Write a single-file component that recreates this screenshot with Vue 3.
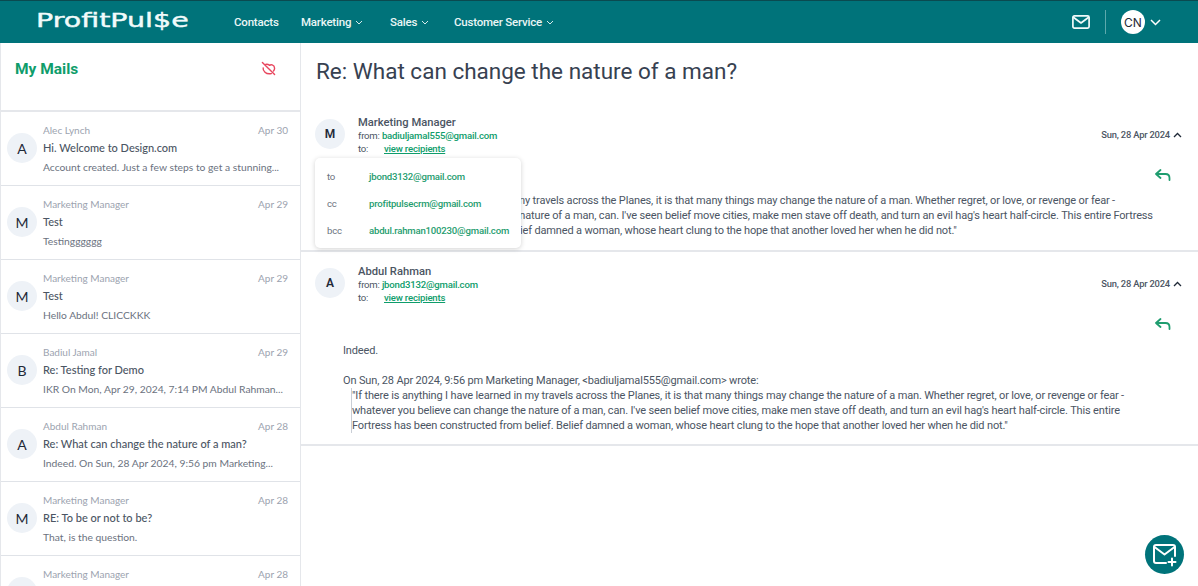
<script setup>
const mails = [
  { n: 'Alec Lynch', d: 'Apr 30', s: 'Hi. Welcome to Design.com', p: 'Account created. Just a few steps to get a stunning...', a: 'A' },
  { n: 'Marketing Manager', d: 'Apr 29', s: 'Test', p: 'Testingggggg', a: 'M' },
  { n: 'Marketing Manager', d: 'Apr 29', s: 'Test', p: 'Hello Abdul! CLICCKKK', a: 'M' },
  { n: 'Badiul Jamal', d: 'Apr 29', s: 'Re: Testing for Demo', p: 'IKR On Mon, Apr 29, 2024, 7:14 PM Abdul Rahman...', a: 'B' },
  { n: 'Abdul Rahman', d: 'Apr 28', s: 'Re: What can change the nature of a man?', p: 'Indeed. On Sun, 28 Apr 2024, 9:56 pm Marketing...', a: 'A' },
  { n: 'Marketing Manager', d: 'Apr 28', s: 'RE: To be or not to be?', p: 'That, is the question.', a: 'M' },
  { n: 'Marketing Manager', d: 'Apr 28', s: 'Re: To be or not to be?', p: 'To be.', a: 'M' },
]
const navs = [
  { t: 'Contacts', c: false },
  { t: 'Marketing', c: true },
  { t: 'Sales', c: true },
  { t: 'Customer Service', c: true },
]
const pop = [
  { k: 'to', v: 'jbond3132@gmail.com' },
  { k: 'cc', v: 'profitpulsecrm@gmail.com' },
  { k: 'bcc', v: 'abdul.rahman100230@gmail.com' },
]
</script>

<template>
  <div class="page">
    <header class="top">
      <div class="logo">ProfitPul$e</div>
      <nav class="nav">
        <a v-for="x in navs" :key="x.t" class="nav-item">{{ x.t }}
          <svg v-if="x.c" width="8" height="5" viewBox="0 0 8 5" fill="none" stroke="#d5eaea" stroke-width="1"><path d="M1 1l3 3 3-3" /></svg>
        </a>
      </nav>
      <div class="top-right">
        <svg class="env" width="18" height="14" viewBox="0 0 18 14" fill="none" stroke="#f0fafa" stroke-width="1.700" stroke-linejoin="round"><rect x="0.9" y="0.9" width="16.200" height="12.200" rx="1.500" /><path d="M1 2l8 6 8-6" /></svg>
        <span class="divider"></span>
        <span class="cn">CN</span>
        <svg width="11" height="7" viewBox="0 0 11 7" fill="none" stroke="#fff" stroke-width="1.500"><path d="M1 1l4.500 4.500L10 1" /></svg>
      </div>
    </header>

    <div class="main">
      <aside class="side">
        <div class="side-head">
          <h2>My Mails</h2>
          <svg width="15" height="15" viewBox="0 0 16 16" fill="none" stroke="#e8475f" stroke-width="1.500" stroke-linecap="round" stroke-linejoin="round"><path d="M1.500 1.500l13 13" /><path d="M5 3.600c1.300-.4 2.900 0 4 1 .8-.6 2-.9 3-.4 1.500.6 2.500 2 2.500 3.600 0 1-.4 2-1.200 2.900M11 13.400c-2.500.6-5 .1-6.800-1.500C2.800 10.800 2 9.200 2.300 7.400" /></svg>
        </div>
        <div v-for="(m, i) in mails" :key="i" class="row">
          <span class="avatar">{{ m.a }}</span>
          <div class="row-body">
            <div class="row-top"><span>{{ m.n }}</span><span>{{ m.d }}</span></div>
            <div class="row-subj">{{ m.s }}</div>
            <div class="row-prev">{{ m.p }}</div>
          </div>
        </div>
      </aside>

      <section class="content">
        <h1>Re: What can change the nature of a man?</h1>

        <article class="msg first">
          <div class="msg-head">
            <span class="avatar big">M</span>
            <div class="who">
              <div class="name">Marketing Manager</div>
              <div class="addr">from: <b>badiuljamal555@gmail.com</b></div>
              <div class="addr"><span class="to">to:</span><u>view recipients</u></div>
            </div>
            <div class="date">Sun, 28 Apr 2024
              <svg width="9" height="6" viewBox="0 0 9 6" fill="none" stroke="#1f2937" stroke-width="1.300"><path d="M1 5l3.500-3.500L8 5" /></svg>
            </div>
          </div>
          <div class="reply-row">
            <svg width="16" height="13" viewBox="0 0 16 13" fill="none" stroke="#1f9d6f" stroke-width="1.800" stroke-linecap="round" stroke-linejoin="round"><path d="M5.500 1L1 5l4.500 4M1 5h9.500c2.500 0 4 1.500 4 4v2" /></svg>
          </div>
          <p class="body">"If there is anything I have learned in my travels across the Planes, it is that many things may change the nature of a man. Whether regret, or love, or revenge or fear -<br>whatever you believe can change the nature of a man, can. I've seen belief move cities, make men stave off death, and turn an evil hag's heart half-circle. This entire Fortress<br>has been constructed from belief. Belief damned a woman, whose heart clung to the hope that another loved her when he did not."</p>
          <div class="pop">
            <div v-for="r in pop" :key="r.k" class="pop-row"><span class="pop-k">{{ r.k }}</span><span class="pop-v">{{ r.v }}</span></div>
          </div>
        </article>

        <article class="msg second">
          <div class="msg-head">
            <span class="avatar big">A</span>
            <div class="who">
              <div class="name">Abdul Rahman</div>
              <div class="addr">from: <b>jbond3132@gmail.com</b></div>
              <div class="addr"><span class="to">to:</span><u>view recipients</u></div>
            </div>
            <div class="date">Sun, 28 Apr 2024
              <svg width="9" height="6" viewBox="0 0 9 6" fill="none" stroke="#1f2937" stroke-width="1.300"><path d="M1 5l3.500-3.500L8 5" /></svg>
            </div>
          </div>
          <div class="reply-row">
            <svg width="16" height="13" viewBox="0 0 16 13" fill="none" stroke="#1f9d6f" stroke-width="1.800" stroke-linecap="round" stroke-linejoin="round"><path d="M5.500 1L1 5l4.500 4M1 5h9.500c2.500 0 4 1.500 4 4v2" /></svg>
          </div>
          <p class="body indeed">Indeed.</p>
          <p class="body wrote">On Sun, 28 Apr 2024, 9:56 pm Marketing Manager, &lt;badiuljamal555@gmail.com&gt; wrote:</p>
          <blockquote class="body">"If there is anything I have learned in my travels across the Planes, it is that many things may change the nature of a man. Whether regret, or love, or revenge or fear -<br>whatever you believe can change the nature of a man, can. I've seen belief move cities, make men stave off death, and turn an evil hag's heart half-circle. This entire<br>Fortress has been constructed from belief. Belief damned a woman, whose heart clung to the hope that another loved her when he did not."</blockquote>
        </article>

        <button class="fab" aria-label="compose">
          <svg width="26" height="24" viewBox="0 0 26 24" fill="none" stroke="#fff" stroke-width="2" stroke-linecap="round" stroke-linejoin="round"><path d="M14 20H4a2 2 0 0 1-2-2V4a2 2 0 0 1 2-2h17a2 2 0 0 1 2 2v9" /><path d="M2.500 4l10 7.500L22.500 4" /><path d="M20 15.500v7M16.500 19h7" /></svg>
        </button>
      </section>
    </div>
  </div>
</template>

<style>
html, body { margin: 0; overflow: hidden; background: #fff; }
</style>

<style scoped>
.page { width: 1198px; height: 586px; overflow: hidden; display: flex; flex-direction: column; font-family: "Roboto", sans-serif; color: #374151; }
.top { height: 43px; flex: none; box-sizing: border-box; border-top: 1px solid #0a4a50; background: #00737a; display: flex; align-items: center; padding: 0 37px 0 36px; color: #fff; }
.logo { width: 198px; flex: none; font-family: "DejaVu Sans", sans-serif; font-size: 19px; font-weight: 400; color: #f2fbfb; -webkit-text-stroke: 0.4px #f2fbfb; margin-bottom: 4px; transform: scaleX(1.5); transform-origin: left; white-space: nowrap; }
.nav { display: grid; grid-template-columns: 67px 89px 64px auto; align-items: center; font-size: 11.500px; letter-spacing: -0.2px; font-weight: 500; color: #eaf6f6; }
.nav-item { display: flex; align-items: center; gap: 4px; white-space: nowrap; }
.top-right { margin-left: auto; display: flex; align-items: center; }
.env { margin-right: 15px; }
.divider { width: 1px; height: 24px; background: #5da9ac; margin-right: 15px; }
.cn { width: 24px; height: 24px; border-radius: 50%; background: #fff; color: #1f2937; font-family: "Inter", sans-serif; font-size: 12px; display: flex; align-items: center; justify-content: center; margin-right: 5px; }
.main { flex: 1; display: flex; min-height: 0; }
.side { width: 301px; flex: none; box-sizing: border-box; border-right: 1px solid #e5e7eb; border-left: 1px solid #e5e7eb; overflow: hidden; }
.side-head { height: 69px; box-sizing: border-box; border-bottom: 2px solid #e5e7eb; display: flex; justify-content: space-between; padding: 17px 24px 0 14px; }
.side-head h2 { margin: 0; font-size: 15.500px; line-height: 18px; font-weight: 700; color: #0f9d6b; }
.side-head svg { margin-top: 1px; }
.row { height: 74px; box-sizing: border-box; border-bottom: 1px solid #e0e3e8; display: flex; padding: 12px 12px 0 6px; font-family: "Lato", sans-serif; }
.avatar { width: 30px; height: 30px; border-radius: 50%; background: #eef2f7; color: #1f2937; display: flex; align-items: center; justify-content: center; flex: none; font-size: 14px; margin: 9px 6px 0 0; }
.row-body { flex: 1; min-width: 0; }
.row-top { display: flex; justify-content: space-between; font-size: 10px; line-height: 12px; color: #9ca3af; }
.row-subj { font-size: 11px; line-height: 14px; font-weight: 500; color: #4b5563; margin-top: 5px; white-space: nowrap; }
.row-prev { font-size: 10.300px; line-height: 12px; color: #6b7280; margin-top: 6px; white-space: nowrap; }
.content { flex: 1; min-width: 0; position: relative; }
h1 { margin: 0; padding: 13px 0 0 15px; height: 60px; box-sizing: border-box; font-size: 22.500px; line-height: 30px; font-weight: 400; color: #374151; }
.msg { position: relative; border-bottom: 2px solid #e5e7eb; box-sizing: border-box; }
.msg.first { height: 149px; }
.msg.second { height: 194px; }
.msg-head { display: flex; align-items: flex-start; padding: 13px 16px 0 14px; height: 60px; box-sizing: border-box; }
.avatar.big { margin: 3px 13px 0 0; font-weight: 600; font-size: 12px; }
.who { flex: 1; }
.name { font-size: 11.200px; line-height: 13px; font-weight: 500; color: #4b5563; }
.addr { font-size: 9.600px; letter-spacing: -0.200px; line-height: 12px; color: #4b5563; margin-top: 1px; }
.addr b { font-weight: 500; color: #0f9d6b; }
.addr u { color: #0f9d6b; font-weight: 500; }
.to { display: inline-block; width: 26px; }
.date { font-size: 9.400px; letter-spacing: -0.200px; line-height: 12px; color: #4b5563; margin-top: 13px; display: flex; align-items: center; gap: 3px; font-weight: 500; }
.reply-row { display: flex; justify-content: flex-end; padding: 6px 27px 0 0; height: 30px; box-sizing: border-box; }
.body { margin: 0 0 0 42px; font-size: 11px; letter-spacing: -0.150px; line-height: 15px; color: #4b5563; white-space: nowrap; }
.indeed { margin-top: 1px; }
.wrote { margin-top: 15px; }
blockquote.body { margin-left: 51px; margin-top: 0; box-shadow: -1px 0 0 #c9ced6; margin-right: 0; }
.pop { position: absolute; left: 14px; top: 55px; width: 206px; height: 90px; box-sizing: border-box; background: #fff; border-radius: 5px; box-shadow: 0 1px 5px rgba(0,0,0,.18); padding: 5px 12px; }
.pop-row { height: 27px; display: flex; align-items: center; font-size: 9.600px; letter-spacing: -0.200px; font-weight: 500; }
.pop-k { width: 42px; flex: none; color: #6b7280; font-weight: 400; }
.pop-v { color: #1f9d6f; }
.fab { position: absolute; right: 14px; bottom: 12px; width: 39px; height: 39px; border: 0; border-radius: 50%; background: #00737a; display: flex; align-items: center; justify-content: center; padding: 0; }
</style>
